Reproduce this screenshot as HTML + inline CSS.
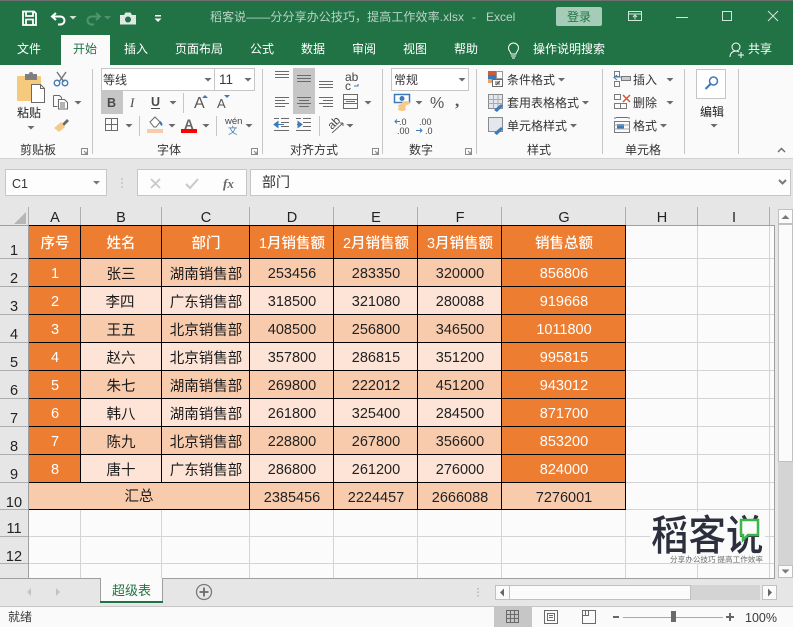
<!DOCTYPE html>
<html><head><meta charset="utf-8"><style>
html,body{margin:0;padding:0;background:#e6e6e6;width:793px;height:627px;overflow:hidden}
svg{display:block}
text{font-family:"Liberation Sans","Noto Sans CJK SC",sans-serif}
.r{font-size:12px;fill:#333}
.tb{font-size:12px;fill:#fff}
.c{font-size:14.5px;fill:#1a1a1a;text-anchor:middle}
.w{font-size:14.5px;fill:#fff;text-anchor:middle}
.h{font-size:14.5px;fill:#fff;text-anchor:middle;font-weight:500}
.n{font-size:14.5px;fill:#222;text-anchor:middle}
.s{stroke:#6a6a6a;fill:none;stroke-width:1}
.tri{fill:#6a6a6a}
.sp{stroke:#c6c6c6;stroke-width:1;shape-rendering:crispEdges}
</style></head><body>
<svg width="793" height="627" viewBox="0 0 793 627" xmlns="http://www.w3.org/2000/svg">
<defs>
<path id="t" d="M-3 0h7l-3.500 3.500z"/>
<path id="lau" d="M0.500 0.500h6v6h-6zM3 3l3 3M6 3.500v2.500h-2.500" fill="none" stroke="#8a8a8a"/>
</defs>
<!-- title bar -->
<rect width="793" height="627" fill="#e6e6e6"/>
<rect width="793" height="65" fill="#217346"/>
<rect width="793" height="1" fill="#6f6f6f"/>
<path d="M23 11.500h11l2 2v11.500h-13z M26 11.500v4.500h7v-4.500 M26 25v-5.500h7v5.500" fill="none" stroke="#fff" stroke-width="1.800"/>
<path d="M56 13l-4 3.500 4 3.500M52 16.500h8c6 0 6 8 0 8h-2" fill="none" stroke="#fff" stroke-width="2"/>
<use href="#t" x="72.500" y="16" fill="#cfe0d6"/>
<path d="M96 13l4 3.500-4 3.500M100 16.500h-8c-6 0-6 8 0 8h2" fill="none" stroke="#4f9470" stroke-width="2"/>
<use href="#t" x="107" y="16" fill="#4f9470"/>
<path d="M120 15h4l1.500-2.500h5l1.500 2.500h4v9.500h-16z" fill="#dfe9e3"/><circle cx="128" cy="19.500" r="3" fill="#217346"/>
<rect x="155" y="15" width="6" height="1.500" fill="#fff"/><use href="#t" x="157.500" y="18.500" fill="#fff"/>
<text x="210" y="21" font-size="12" fill="#b9d3c5" textLength="254">稻客说——分分享办公技巧，提高工作效率.xlsx</text>
<text x="472" y="21" font-size="12" fill="#b9d3c5">-</text>
<text x="486" y="21" font-size="12" fill="#b9d3c5">Excel</text>
<rect x="556" y="7" width="46" height="19" rx="2" fill="#a5ccb6"/>
<text x="567" y="21" font-size="12" fill="#217346">登录</text>
<path d="M628.500 11.500h13v9h-13zM628.500 14h13M635 19.500v-4M633 17l2-2 2 2" fill="none" stroke="#d5e4db"/>
<rect x="676" y="17" width="12" height="1" fill="#d5e4db"/>
<rect x="722.500" y="11.500" width="9" height="9" fill="none" stroke="#d5e4db"/>
<path d="M768 11l10 10M778 11l-10 10" stroke="#d5e4db" fill="none"/>
<!-- tabs -->
<rect x="61" y="35" width="49" height="30" fill="#fafafa"/>
<text class="tb" x="17" y="53">文件</text>
<text x="73" y="53" font-size="12" fill="#217346">开始</text>
<text class="tb" x="124" y="53">插入</text>
<text class="tb" x="175" y="53">页面布局</text>
<text class="tb" x="250" y="53">公式</text>
<text class="tb" x="301" y="53">数据</text>
<text class="tb" x="352" y="53">审阅</text>
<text class="tb" x="403" y="53">视图</text>
<text class="tb" x="454" y="53">帮助</text>
<path d="M511 56h5M512 58h3M511 54c0-2-2.500-3-2.500-6a5 5 0 0 1 10 0c0 3-2.500 4-2.500 6z" fill="none" stroke="#fff"/>
<text class="tb" x="533" y="53">操作说明搜索</text>
<circle cx="736" cy="47" r="4" fill="none" stroke="#fff"/>
<path d="M730 57c0-4 3-6 6-6 1 0 2 .3 3 1M738 55h6M741 52v6" fill="none" stroke="#fff"/>
<text class="tb" x="748" y="53">共享</text>
<!-- ribbon -->
<rect y="65" width="793" height="93" fill="#fafafa"/>
<rect y="158" width="793" height="1" fill="#d2d2d2"/>
<g class="sp">
<path d="M92.500 69v85M262.500 69v85M382.500 69v85M476.500 69v85M602.500 69v85M684.500 69v85M738.500 69v85M183.500 93v20M139.500 116v20M216.500 116v20M319.500 116v20"/>
</g>
<!-- clipboard -->
<rect x="17" y="76" width="24" height="25" rx="1" fill="#f6ca7c"/>
<rect x="25" y="74" width="12" height="6" fill="#7f7f7f"/><circle cx="31" cy="74" r="2" fill="#7f7f7f"/>
<path d="M31.500 84.500h9l4 4v14h-13z" fill="#fff" stroke="#6a6a6a"/><path d="M40.500 84.500v4h4" fill="none" stroke="#6a6a6a"/>
<text class="r" x="17" y="117" style="fill:#222">粘贴</text>
<use href="#t" class="tri" x="30.500" y="126"/>
<path d="M57 72l7 10M66 72l-7 10" stroke="#7a7a7a" fill="none" stroke-width="1.500"/>
<circle cx="57" cy="83" r="2.800" fill="none" stroke="#3d7ab8" stroke-width="1.300"/><circle cx="65" cy="83" r="2.800" fill="none" stroke="#3d7ab8" stroke-width="1.300"/>
<path d="M53.500 95.500h6l2 2v1.500M53.500 95.500v11h4M58.500 99.500h6l3 3v6.500h-9zM60 103h5M60 105h5M60 107h5" class="s"/>
<use href="#t" class="tri" x="77.500" y="101"/>
<path d="M62 124l5-5 2 2-5 5z" fill="#6a6a6a"/><path d="M54 128l7-6 4 5-6 5z" fill="#f5c98a"/>
<text class="r" x="20" y="154">剪贴板</text><use href="#lau" x="81" y="148"/>
<!-- font -->
<rect x="101.500" y="68.500" width="153" height="22" fill="#fff" stroke="#c6c6c6"/>
<path d="M214.500 69v22" stroke="#c6c6c6" shape-rendering="crispEdges"/>
<text class="r" x="103" y="84">等线</text><text x="219" y="84" font-size="13.500" fill="#3a3a3a">11</text>
<use href="#t" class="tri" x="207.500" y="78"/><use href="#t" class="tri" x="247.500" y="78"/>
<rect x="101" y="91" width="22" height="23" fill="#c6c6c6"/>
<text x="107" y="107" font-size="12.500" font-weight="bold" fill="#4a4a4a">B</text>
<text x="130" y="107" font-size="13" font-style="italic" fill="#4a4a4a" style="font-family:'Liberation Serif'">I</text>
<text x="151" y="106" font-size="12.500" font-weight="bold" fill="#4a4a4a">U</text><rect x="151" y="108" width="9" height="1" fill="#4a4a4a"/>
<use href="#t" class="tri" x="172.500" y="101"/>
<text x="194" y="108" font-size="16" fill="#555">A</text><path d="M202 98h6l-3-3z" fill="#3d7ab8"/>
<text x="217" y="108" font-size="13" fill="#555">A</text><path d="M224 95h6l-3 3z" fill="#3d7ab8"/>
<path d="M105.500 118.500h12v12h-12zM111.500 118.500v12M105.500 124.500h12" class="s"/>
<use href="#t" class="tri" x="128.500" y="124"/>
<path d="M150 122l5-5 5 5-4 5h-2z" fill="#fff" stroke="#6a6a6a"/><path d="M160 121c2 1 3 3 2 5-2-1-3-3-2-5z" fill="#3d7ab8"/>
<rect x="147" y="129" width="16" height="4" fill="#f8cbad"/>
<use href="#t" class="tri" x="171.500" y="124"/>
<text x="184" y="129" font-size="13.500" font-weight="bold" fill="#666">A</text>
<rect x="181" y="129" width="16" height="4" fill="#f00"/>
<use href="#t" class="tri" x="205.500" y="124"/>
<text x="225" y="124" font-size="9.500" fill="#444">wén</text><text x="228" y="134" font-size="9.500" fill="#3d7ab8">文</text>
<use href="#t" class="tri" x="248.500" y="124"/>
<text class="r" x="157" y="154">字体</text><use href="#lau" x="251" y="148"/>
<!-- align -->
<rect x="293" y="68" width="22" height="46" fill="#c6c6c6"/>
<g stroke="#6a6a6a" fill="none" shape-rendering="crispEdges">
<path d="M275 71.500h14M275 74.500h14M275 77.500h14"/>
<path d="M297 75.500h14M297 78.500h14M297 81.500h14"/>
<path d="M319 81.500h14M319 84.500h14M319 87.500h14"/>
<path d="M275 97.500h14M275 100.500h10M275 103.500h14M275 106.500h10"/>
<path d="M297 97.500h14M299 100.500h10M297 103.500h14M299 106.500h10"/>
<path d="M319 97.500h14M323 100.500h10M319 103.500h14M323 106.500h10"/>
<path d="M343.500 94.500h14v14h-14zM343.500 99.500h14M343.500 103.500h14"/>
<path d="M281 118.500h8M281 122.500h8M281 126.500h8M274 130.500h15M274 118.500h5"/>
<path d="M303 118.500h8M303 122.500h8M303 126.500h8M296 130.500h15M296 118.500h5"/>
</g>
<path d="M346 101.500h9" stroke="#3d7ab8"/>
<text x="345" y="81" font-size="12" fill="#444">ab</text><text x="345" y="90" font-size="12" fill="#444">c</text>
<path d="M358 84v2h-4" stroke="#3d7ab8" fill="none"/>
<use href="#t" class="tri" x="367.500" y="101"/>
<path d="M274 124.500l4-3v6zM278 124.500h6" fill="#3d7ab8" stroke="#3d7ab8"/>
<path d="M302 124.500l-4-3v6zM297 124.500h5" fill="#3d7ab8" stroke="#3d7ab8"/>
<text x="0" y="0" font-size="11.500" fill="#444" transform="translate(332 130) rotate(-45)">ab</text>
<path d="M332 133l11-10M343 123h-3M343 123v3" stroke="#666" fill="none"/>
<use href="#t" class="tri" x="349.500" y="124"/>
<text class="r" x="290" y="154">对齐方式</text><use href="#lau" x="372" y="148"/>
<!-- number -->
<rect x="391.500" y="68.500" width="77" height="22" fill="#fff" stroke="#c6c6c6"/>
<text class="r" x="394" y="84">常规</text><use href="#t" class="tri" x="461.500" y="78"/>
<rect x="394.500" y="94.500" width="15" height="8" fill="#fff" stroke="#3d7ab8" stroke-width="1.500"/>
<circle cx="402" cy="98.500" r="2.500" fill="#3d7ab8"/>
<ellipse cx="402" cy="106" rx="4" ry="2" fill="#f5c98a"/><ellipse cx="406" cy="103" rx="4" ry="2" fill="#f5c98a"/><ellipse cx="402" cy="109" rx="4" ry="2" fill="#f5c98a"/>
<use href="#t" class="tri" x="418.500" y="101"/>
<text x="430" y="108" font-size="16" fill="#555">%</text>
<text x="455" y="106" font-size="17" font-weight="bold" fill="#555" style="font-family:'Liberation Serif'">,</text>
<text x="399" y="125" font-size="9" fill="#444">.0</text><text x="397" y="134" font-size="9" fill="#444">.00</text>
<path d="M395 121.500h5M397 119.500l-2 2 2 2" stroke="#3d7ab8" fill="none"/>
<text x="419" y="125" font-size="9" fill="#444">.00</text><text x="425" y="134" font-size="9" fill="#444">.0</text>
<path d="M416 130.500h6M420 128.500l2 2-2 2" stroke="#3d7ab8" fill="none"/>
<text class="r" x="409" y="154">数字</text><use href="#lau" x="465" y="148"/>
<!-- styles -->
<rect x="488" y="71" width="8" height="4" fill="#d05a3a"/><rect x="496.500" y="71.500" width="6" height="7" fill="none" stroke="#999"/><rect x="488" y="75" width="8" height="4" fill="#3d7ab8"/><rect x="488" y="79" width="4" height="4" fill="#f0a060"/>
<rect x="492.500" y="79.500" width="10" height="7" fill="#fff" stroke="#6a6a6a"/><path d="M495 82h5M495 84h5M500 81l-4 4" stroke="#555" fill="none"/>
<path d="M488.500 94.500h14v14h-14z" fill="#e4e8ee" stroke="#8a8a8a"/><path d="M488.500 99.500h14M488.500 103.500h14M493.500 94.500v14M498 94.500v14" stroke="#aaa" fill="none"/>
<path d="M494 110l7-6 2 2-6 6z" fill="#3d7ab8"/>
<path d="M488.500 117.500h14v14h-14z" fill="#e4e8ee" stroke="#8a8a8a"/>
<path d="M494 133l7-6 2 2-6 6z" fill="#3d7ab8"/>
<text class="r" x="507" y="84">条件格式</text><use href="#t" class="tri" x="561" y="78"/>
<text class="r" x="507" y="107">套用表格格式</text><use href="#t" class="tri" x="585" y="101"/>
<text class="r" x="507" y="130">单元格样式</text><use href="#t" class="tri" x="573" y="124"/>
<text class="r" x="527" y="154">样式</text>
<!-- cells -->
<path d="M614.500 71.500h5v5h-5zM614.500 81.500h5v5h-5z" stroke="#7a7a7a" fill="none"/>
<path d="M614 77h7M617 75l-3 2.500 3 2.500" stroke="#3d7ab8" fill="none"/><rect x="621.500" y="76.500" width="9" height="4" fill="#ccc" stroke="#7a7a7a"/>
<path d="M614.500 94.500h6v5h-6zM614.500 103.500h6v5h-6zM620.500 103.500h6v5h-6z" stroke="#7a7a7a" fill="none"/>
<path d="M623 95l7 7M630 95l-7 7" stroke="#d05a3a" stroke-width="1.500"/>
<path d="M614 118h2M628 118h2M616 117.500h12" stroke="#3d7ab8"/>
<rect x="614.500" y="121.500" width="15" height="11" fill="none" stroke="#7a7a7a"/><rect x="617" y="124" width="7" height="5" fill="#3d7ab8"/><path d="M614.500 125h15M614.500 129h15" stroke="#aaa"/>
<text class="r" x="633" y="84">插入</text><use href="#t" class="tri" x="669.500" y="78"/>
<text class="r" x="633" y="107">删除</text><use href="#t" class="tri" x="669.500" y="101"/>
<text class="r" x="633" y="130">格式</text><use href="#t" class="tri" x="663" y="124"/>
<text class="r" x="625" y="154">单元格</text>
<!-- edit -->
<rect x="696.500" y="69.500" width="29" height="29" fill="#fff" stroke="#c6c6c6"/>
<circle cx="713.500" cy="81" r="4" fill="none" stroke="#3d7ab8" stroke-width="1.500"/><path d="M710.500 84l-5 5" stroke="#3d7ab8" stroke-width="2"/>
<text class="r" x="700" y="116" style="fill:#222">编辑</text><use href="#t" class="tri" x="713.500" y="124"/>
<path d="M778 152l3.500-3.500 3.500 3.500" fill="none" stroke="#6a6a6a" stroke-width="1.400"/>
<!-- formula bar -->
<rect x="5.500" y="169.500" width="101" height="26" fill="#fdfdfd" stroke="#c6c6c6"/>
<text x="12" y="188" font-size="12.500" fill="#333">C1</text>
<use href="#t" x="96" y="181" fill="#777"/>
<path d="M122 178v2M122 182v2M122 186v2" stroke="#b0b0b0"/>
<rect x="137.500" y="169.500" width="109" height="26" fill="#fdfdfd" stroke="#c6c6c6"/>
<path d="M151 179l9 9M160 179l-9 9" stroke="#c9c9c9" stroke-width="1.800"/>
<path d="M186 184l4 4 8-9" stroke="#c9c9c9" stroke-width="2" fill="none"/>
<text x="223" y="188" font-size="13" font-style="italic" font-weight="bold" fill="#666" style="font-family:'Liberation Serif'">fx</text>
<rect x="250.500" y="169.500" width="540" height="26" fill="#fdfdfd" stroke="#c6c6c6"/>
<text x="262" y="187" font-size="14" fill="#333">部门</text>
<path d="M779 180l3.500 3.500 3.500-3.500" fill="none" stroke="#777" stroke-width="2"/>
<!-- sheet -->
<rect x="29" y="226" width="745" height="352" fill="#fbfbfb"/>
<path d="M26 212v12h-12z" fill="#b6b6b6"/>
<g stroke="#d4d4d4" fill="none" shape-rendering="crispEdges">
<path d="M697.500 226v352M769.500 226v352M625.500 226v352M80.500 510v68M161.500 510v68M249.500 510v68M333.500 510v68M417.500 510v68M501.500 510v68"/>
<path d="M29 536.500h745M29 563.500h745M626 258.500h148M626 286.500h148M626 314.500h148M626 342.500h148M626 370.500h148M626 398.500h148M626 426.500h148M626 454.500h148M626 482.500h148M626 509.500h148"/>
</g>
<!-- header separators -->
<g stroke="#aeaeae" fill="none" shape-rendering="crispEdges">
<path d="M28.500 207v18M80.500 207v18M161.500 207v18M249.500 207v18M333.500 207v18M417.500 207v18M501.500 207v18M625.500 207v18M697.500 207v18M769.500 207v18"/>
<path d="M0 258.500h28M0 286.500h28M0 314.500h28M0 342.500h28M0 370.500h28M0 398.500h28M0 426.500h28M0 454.500h28M0 482.500h28M0 509.500h28M0 536.500h28M0 563.500h28"/>
</g>
<path d="M0 225.500h774.500V578.500H0M28.500 225v353" stroke="#9f9f9f" fill="none" shape-rendering="crispEdges"/>
<g>
<text class="n" x="55" y="222">A</text><text class="n" x="121" y="222">B</text><text class="n" x="206" y="222">C</text><text class="n" x="292" y="222">D</text><text class="n" x="376" y="222">E</text><text class="n" x="460" y="222">F</text><text class="n" x="564" y="222">G</text><text class="n" x="662" y="222">H</text><text class="n" x="734" y="222">I</text>
<text class="n" x="14" y="255">1</text><text class="n" x="14" y="283">2</text><text class="n" x="14" y="311">3</text><text class="n" x="14" y="339">4</text><text class="n" x="14" y="367">5</text><text class="n" x="14" y="395">6</text><text class="n" x="14" y="423">7</text><text class="n" x="14" y="451">8</text><text class="n" x="14" y="479">9</text><text class="n" x="14" y="507">10</text><text class="n" x="14" y="533">11</text><text class="n" x="14" y="561">12</text>
</g>
<!-- cell fills -->
<g shape-rendering="crispEdges">
<rect x="29" y="226" width="596" height="33" fill="#ed7d31"/>
<rect x="29" y="259" width="52" height="224" fill="#ed7d31"/>
<rect x="502" y="259" width="124" height="224" fill="#ed7d31"/>
<rect x="81" y="259" width="421" height="28" fill="#f8cbad"/>
<rect x="81" y="287" width="421" height="28" fill="#fde4d6"/>
<rect x="81" y="315" width="421" height="28" fill="#f8cbad"/>
<rect x="81" y="343" width="421" height="28" fill="#fde4d6"/>
<rect x="81" y="371" width="421" height="28" fill="#f8cbad"/>
<rect x="81" y="399" width="421" height="28" fill="#fde4d6"/>
<rect x="81" y="427" width="421" height="28" fill="#f8cbad"/>
<rect x="81" y="455" width="421" height="28" fill="#fde4d6"/>
<rect x="29" y="483" width="597" height="27" fill="#f8cbad"/>
</g>
<g stroke="#000" fill="none" shape-rendering="crispEdges">
<path d="M29 225.500h597M29 258.500h597M29 286.500h597M29 314.500h597M29 342.500h597M29 370.500h597M29 398.500h597M29 426.500h597M29 454.500h597M29 482.500h597M29 509.500h597"/>
<path d="M80.500 225v258M161.500 225v258M249.500 225v285M333.500 225v285M417.500 225v285M501.500 225v285M625.500 225v285"/>
</g>
<!-- header text -->
<text class="h" x="55" y="248">序号</text><text class="h" x="121" y="248">姓名</text><text class="h" x="206" y="248">部门</text><text class="h" x="292" y="248">1月销售额</text><text class="h" x="376" y="248">2月销售额</text><text class="h" x="460" y="248">3月销售额</text><text class="h" x="564" y="248">销售总额</text>
<!-- rows -->
<text class="w" x="55" y="278">1</text><text class="c" x="121" y="279">张三</text><text class="c" x="206" y="279">湖南销售部</text><text class="n" x="292" y="278">253456</text><text class="n" x="376" y="278">283350</text><text class="n" x="460" y="278">320000</text><text class="w" x="564" y="278">856806</text>
<text class="w" x="55" y="306">2</text><text class="c" x="120" y="307">李四</text><text class="c" x="206" y="307">广东销售部</text><text class="n" x="292" y="306">318500</text><text class="n" x="376" y="306">321080</text><text class="n" x="460" y="306">280088</text><text class="w" x="564" y="306">919668</text>
<text class="w" x="55" y="334">3</text><text class="c" x="121" y="335">王五</text><text class="c" x="206" y="335">北京销售部</text><text class="n" x="292" y="334">408500</text><text class="n" x="376" y="334">256800</text><text class="n" x="460" y="334">346500</text><text class="w" x="564" y="334">1011800</text>
<text class="w" x="55" y="362">4</text><text class="c" x="121" y="363">赵六</text><text class="c" x="206" y="363">北京销售部</text><text class="n" x="292" y="362">357800</text><text class="n" x="376" y="362">286815</text><text class="n" x="460" y="362">351200</text><text class="w" x="564" y="362">995815</text>
<text class="w" x="55" y="390">5</text><text class="c" x="121" y="391">朱七</text><text class="c" x="206" y="391">湖南销售部</text><text class="n" x="292" y="390">269800</text><text class="n" x="376" y="390">222012</text><text class="n" x="460" y="390">451200</text><text class="w" x="564" y="390">943012</text>
<text class="w" x="55" y="418">6</text><text class="c" x="121" y="419">韩八</text><text class="c" x="206" y="419">湖南销售部</text><text class="n" x="292" y="418">261800</text><text class="n" x="376" y="418">325400</text><text class="n" x="460" y="418">284500</text><text class="w" x="564" y="418">871700</text>
<text class="w" x="55" y="446">7</text><text class="c" x="121" y="447">陈九</text><text class="c" x="206" y="447">北京销售部</text><text class="n" x="292" y="446">228800</text><text class="n" x="376" y="446">267800</text><text class="n" x="460" y="446">356600</text><text class="w" x="564" y="446">853200</text>
<text class="w" x="55" y="474">8</text><text class="c" x="121" y="475">唐十</text><text class="c" x="206" y="475">广东销售部</text><text class="n" x="292" y="474">286800</text><text class="n" x="376" y="474">261200</text><text class="n" x="460" y="474">276000</text><text class="w" x="564" y="474">824000</text>
<text class="c" x="139" y="501">汇总</text><text class="n" x="292" y="502">2385456</text><text class="n" x="376" y="502">2224457</text><text class="n" x="460" y="502">2666088</text><text class="n" x="564" y="502">7276001</text>
<!-- logo -->
<rect x="650" y="512" width="115" height="51" fill="#fbfbfb"/>
<text transform="translate(651 550) scale(1 1.100)" font-size="37.500" fill="#2c2f3d" font-weight="500" style="font-family:'Noto Sans CJK SC',sans-serif">稻客说</text>
<path d="M741 520h17v15h-10l-5 5v-5h-2z" fill="#fbfbfb" stroke="#3cb54a" stroke-width="2.500"/>
<text x="670" y="562" font-size="7.600" fill="#6a6a6a" textLength="93" style="font-family:'Noto Sans CJK SC',sans-serif">分享办公技巧 提高工作效率</text>
<!-- v scrollbar -->
<rect x="778" y="209" width="15" height="369" fill="#d4d4d4"/>
<rect x="778.500" y="209.500" width="14" height="14" fill="#fbfbfb" stroke="#c0c0c0"/><path d="M781.500 219h8l-4-4z" fill="#7a7a7a"/>
<rect x="778.500" y="224.500" width="14" height="237" fill="#fbfbfb" stroke="#c0c0c0"/>
<rect x="778.500" y="565.500" width="14" height="12" fill="#fbfbfb" stroke="#c0c0c0"/><path d="M781.500 569.500h8l-4 4z" fill="#7a7a7a"/>
<!-- tab bar -->
<rect y="579" width="793" height="27" fill="#e6e6e6"/>
<rect x="0" y="578" width="775" height="1" fill="#9f9f9f"/>
<path d="M31 588v8l-4-4zM56 588v8l4-4z" fill="#c4c4c4"/>
<path d="M100.500 578v25M162.500 578v25" stroke="#9f9f9f" shape-rendering="crispEdges"/>
<rect x="101" y="578" width="61" height="24" fill="#fbfbfb"/>
<rect x="100" y="601" width="63" height="2" fill="#217346"/>
<text x="112" y="595" font-size="13" fill="#217346">超级表</text>
<circle cx="204" cy="592" r="7.500" fill="none" stroke="#7a7a7a" stroke-width="1.300"/><path d="M199.500 592h9M204 587.500v9" stroke="#6a6a6a" stroke-width="1.800"/>
<path d="M478 588v1.500M478 591.500v1.500M478 595v1.500" stroke="#9a9a9a"/>
<rect x="495.500" y="585.500" width="14" height="14" fill="#fbfbfb" stroke="#c0c0c0"/><path d="M504 588.500v8l-4-4z" fill="#666"/>
<rect x="510" y="585" width="250" height="15" fill="#d4d4d4"/>
<rect x="509.500" y="585.500" width="181" height="14" fill="#fbfbfb" stroke="#c0c0c0"/>
<rect x="762.500" y="585.500" width="14" height="14" fill="#fbfbfb" stroke="#c0c0c0"/><path d="M768 588.500v8l4-4z" fill="#666"/>
<!-- status -->
<rect y="606" width="793" height="21" fill="#fafafa"/>
<rect y="606" width="793" height="1" fill="#c6c6c6"/>
<text x="8" y="621" font-size="12" fill="#3a3a3a">就绪</text>
<rect x="494" y="607" width="38" height="20" fill="#c6c6c6"/>
<path d="M506.500 610.500h12v12h-12zM510.500 610.500v12M514.500 610.500v12M506.500 614.500h12M506.500 618.500h12" stroke="#6a6a6a" fill="none" shape-rendering="crispEdges"/>
<path d="M544.500 610.500h13v13h-13zM547.500 613.500h7v7h-7zM549 615.500h4M549 617.500h4" stroke="#6a6a6a" fill="none" shape-rendering="crispEdges"/>
<path d="M582.500 610.500h13v13h-13zM585.500 610.500v5h3v-5M582.500 615.500h3" stroke="#6a6a6a" fill="none" shape-rendering="crispEdges"/>
<rect x="613" y="616" width="6" height="2" fill="#666"/>
<rect x="623" y="617" width="100" height="1" fill="#a8a8a8"/>
<rect x="671" y="611" width="5" height="11" fill="#6a6a6a"/>
<path d="M726 617h8M730 613v8" stroke="#666" stroke-width="2"/>
<text x="745" y="622" font-size="12.500" fill="#3a3a3a">100%</text>
</svg>
</body></html>
